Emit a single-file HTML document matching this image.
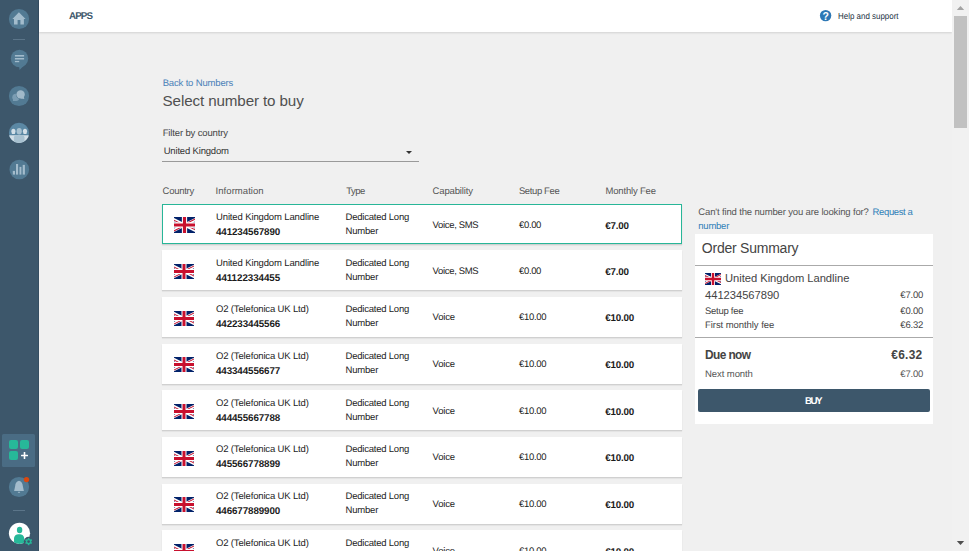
<!DOCTYPE html>
<html lang="en"><head><meta charset="utf-8"><title>Select number to buy</title>
<style>
html,body{margin:0;padding:0}
body{width:969px;height:551px;overflow:hidden;position:relative;background:#f0f0f0;font-family:"Liberation Sans",sans-serif;}
.abs{position:absolute;display:block}
.t{position:absolute;line-height:1;white-space:nowrap}
.side{position:absolute;left:0;top:0;width:39px;height:551px;background:#3d576b;box-shadow:inset -1px 0 0 rgba(30,50,70,.22)}
.top{position:absolute;left:39px;top:0;width:913px;height:32px;background:#fff;box-shadow:0 1px 2px rgba(0,0,0,.13)}
.sb{position:absolute;left:952px;top:0;width:17px;height:551px;background:#f1f1f1}
.thumb{position:absolute;left:954px;top:16px;width:13px;height:112px;background:#c1c1c1}
.arr{position:absolute;left:957px;width:0;height:0;border-left:3.5px solid transparent;border-right:3.5px solid transparent}
.arr.up{top:6px;border-bottom:4px solid #a3a3a3}
.arr.dn{top:541px;border-top:4px solid #505050}
.row{position:absolute;left:162px;width:520px;height:40px;background:#fff;box-sizing:border-box;box-shadow:0 1px 1px rgba(0,0,0,.10),0 2px 1px rgba(0,0,0,.03)}
.row.sel{border:1px solid #28b698}
.card{position:absolute;left:695px;top:234px;width:238px;height:190px;background:#fff}
.btn{position:absolute;left:698px;top:389px;width:232px;height:22.5px;background:#3d576b;border-radius:2px}
</style></head><body>
<div class="side"></div>
<svg class="abs" style="left:0;top:0" width="39" height="551" viewBox="0 0 39 551">
<!-- home -->
<circle cx="19" cy="19" r="10.1" fill="#527a93"/>
<path d="M18.9 12.3 L25.6 18.9 L23.9 18.9 L23.9 24.5 L20.4 24.5 L20.4 20 L17.6 20 L17.6 24.5 L14 24.5 L14 18.9 L12.4 18.9 Z" fill="#a3bccc"/>
<rect x="13" y="39" width="12" height="1" fill="#5b7589"/>
<!-- message -->
<circle cx="19.5" cy="58.5" r="8.7" fill="#527a93"/>
<path d="M19.2 66.5 L26 63.6 L19.5 70.1 Z" fill="#527a93"/>
<rect x="14.9" y="55" width="9.2" height="1.6" fill="#a3bccc"/>
<rect x="14.9" y="58" width="9.2" height="1.5" fill="#a3bccc"/>
<rect x="14.9" y="60.9" width="4.3" height="1.3" fill="#a3bccc"/>
<!-- conversations -->
<circle cx="19" cy="96" r="10.1" fill="#527a93"/>
<circle cx="15.9" cy="97.3" r="3.6" fill="#7b9db3"/>
<path d="M12.8 101 L13.6 98 L17 101 Z" fill="#7b9db3"/>
<circle cx="20.6" cy="94.4" r="4.7" fill="#527a93"/>
<circle cx="20.6" cy="94.4" r="4.2" fill="#a0b9c9"/>
<path d="M24.3 99 L23.6 95.5 L20.5 98.6 Z" fill="#a0b9c9"/>
<!-- people -->
<clipPath id="pc"><circle cx="19" cy="132.9" r="10.1"/></clipPath>
<circle cx="19" cy="132.9" r="10.1" fill="#5b88a4"/>
<g clip-path="url(#pc)">
<ellipse cx="13.4" cy="131.4" rx="2.1" ry="2.7" fill="#d3dfe7"/>
<ellipse cx="25" cy="131.4" rx="2.1" ry="2.7" fill="#d3dfe7"/>
<ellipse cx="19.2" cy="131.2" rx="2.6" ry="3.3" fill="#a8c1d0"/>
<path d="M8 135.2 L30 135.2 L30 144 L8 144 Z" fill="#d3dfe7"/>
<path d="M13.9 144 L13.9 137.6 Q13.9 135.2 16.3 135.2 L22.1 135.2 Q24.5 135.2 24.5 137.6 L24.5 144 Z" fill="#a8c1d0"/>
</g>
<!-- analytics -->
<circle cx="19.3" cy="169.5" r="9.8" fill="#527a93"/>
<rect x="12.8" y="170.9" width="2.2" height="3.7" fill="#a3bccc"/>
<rect x="16" y="164" width="2.1" height="10.6" fill="#a3bccc"/>
<rect x="19.5" y="166.9" width="1.9" height="7.7" fill="#a3bccc"/>
<rect x="22.7" y="164.9" width="2.2" height="9.7" fill="#a3bccc"/>
<!-- apps tile -->
<rect x="2" y="434" width="33" height="33" rx="1.5" fill="#4a6c84"/>
<rect x="9" y="440" width="9" height="9" rx="2" fill="#27b899"/>
<rect x="20" y="440" width="9" height="9" rx="2" fill="#27b899"/>
<rect x="9" y="451" width="9" height="9" rx="2" fill="#27b899"/>
<rect x="21" y="454.7" width="7" height="1.6" rx=".5" fill="#fff"/>
<rect x="23.7" y="452" width="1.6" height="7" rx=".5" fill="#fff"/>
<!-- bell -->
<circle cx="19" cy="487" r="10.1" fill="#527a93"/>
<path d="M19 480.8 C16.3 481.6 15.3 483.6 15.2 486 L14.1 491 L23.9 491 L22.8 486 C22.7 483.6 21.7 481.6 19 480.8 Z" fill="#a3bccc"/>
<rect x="17.9" y="491.8" width="2.2" height="1" rx=".4" fill="#a3bccc"/>
<circle cx="26.5" cy="479.6" r="2.7" fill="#d9480f"/>
<rect x="13" y="510" width="12" height="1" fill="#5b7589"/>
<!-- user -->
<clipPath id="uc"><circle cx="19.5" cy="533.3" r="10.6"/></clipPath>
<circle cx="19.5" cy="533.3" r="10.6" fill="#fff"/>
<g clip-path="url(#uc)">
<ellipse cx="19.6" cy="530" rx="2.7" ry="3.3" fill="#27b899"/>
<path d="M14 546 L14 539 C14 535.5 16.2 534.2 19.1 534.2 C22 534.2 24.2 535.5 24.2 539 L24.2 546 Z" fill="#27b899"/>
</g>
<circle cx="28.6" cy="541.6" r="4.8" fill="#3d576b"/>
<g transform="translate(28.6 541.6)" fill="#27b899">
<circle r="2.7"/>
<rect x="-.8" y="-3.6" width="1.6" height="7.2"/>
<rect x="-.8" y="-3.6" width="1.6" height="7.2" transform="rotate(60)"/>
<rect x="-.8" y="-3.6" width="1.6" height="7.2" transform="rotate(120)"/>
<circle r="1.3" fill="#3d576b"/>
</g>
</svg>
<div class="top"></div>
<div class="t" style="top:11px;line-height:11px;font-size:9.8px;color:#3d576b;left:69.00px;letter-spacing:-0.896px;font-weight:bold;text-rendering:geometricPrecision;">APPS</div>
<svg class="abs" style="left:819px;top:9px" width="14" height="14" viewBox="0 0 14 14"><circle cx="6.6" cy="6.6" r="5.7" fill="#2d78b5"/><text x="6.6" y="10.5" font-family="Liberation Sans, sans-serif" font-size="10.5" font-weight="bold" fill="#fff" text-anchor="middle">?</text></svg>
<div class="t" style="top:11px;line-height:10px;font-size:8.7px;color:#22313f;left:837.90px;transform:scaleX(0.9146);transform-origin:0 0;text-rendering:geometricPrecision;">Help and support</div>
<div class="sb"></div><div class="thumb"></div><svg class="abs" style="left:952px;top:0" width="17" height="551" viewBox="0 0 17 551"><path d="M4.8 10 L12.2 10 L8.5 5.9 Z" fill="#a3a3a3"/><path d="M4.8 541 L12.2 541 L8.5 545.1 Z" fill="#505050"/></svg>
<div class="t" style="top:78px;line-height:11px;font-size:9.5px;color:#4a80b8;left:162.70px;letter-spacing:-0.161px;text-rendering:geometricPrecision;">Back to Numbers</div>
<div class="t" style="top:92px;line-height:17px;font-size:15.2px;color:#505050;left:162.60px;letter-spacing:-0.123px;">Select number to buy</div>
<div class="t" style="top:128px;line-height:11px;font-size:9.5px;color:#444;left:162.70px;letter-spacing:-0.142px;text-rendering:geometricPrecision;">Filter by country</div>
<div class="t" style="top:146px;line-height:11px;font-size:9.5px;color:#333;left:163.70px;letter-spacing:-0.177px;text-rendering:geometricPrecision;">United Kingdom</div>
<div class="abs" style="left:162px;top:161px;width:257px;height:1px;background:#9a9a9a"></div>
<div class="abs" style="left:406px;top:151px;border-left:3px solid transparent;border-right:3px solid transparent;border-top:3.3px solid #333;"></div>
<div class="t" style="top:186px;line-height:11px;font-size:9.5px;color:#555;left:162.60px;letter-spacing:-0.277px;text-rendering:geometricPrecision;">Country</div>
<div class="t" style="top:186px;line-height:11px;font-size:9.5px;color:#555;left:215.60px;letter-spacing:0.048px;text-rendering:geometricPrecision;">Information</div>
<div class="t" style="top:186px;line-height:11px;font-size:9.5px;color:#555;left:346.20px;letter-spacing:-0.532px;text-rendering:geometricPrecision;">Type</div>
<div class="t" style="top:186px;line-height:11px;font-size:9.5px;color:#555;left:432.60px;letter-spacing:-0.157px;text-rendering:geometricPrecision;">Capability</div>
<div class="t" style="top:186px;line-height:11px;font-size:9.5px;color:#555;left:518.90px;letter-spacing:-0.379px;text-rendering:geometricPrecision;">Setup Fee</div>
<div class="t" style="top:186px;line-height:11px;font-size:9.5px;color:#555;left:605.50px;letter-spacing:-0.177px;text-rendering:geometricPrecision;">Monthly Fee</div>
<svg class="abs" style="left:0;top:0" width="0" height="0"><defs><clipPath id="ukt"><path d="M30,15 h30 v15 z v15 h-30 z h-30 v-15 z v-15 h30 z"/></clipPath><symbol id="uk" viewBox="10 0 40 30" preserveAspectRatio="none"><path d="M0,0 v30 h60 v-30 z" fill="#012169"/><path d="M0,0 L60,30 M60,0 L0,30" stroke="#fff" stroke-width="6"/><path d="M0,0 L60,30 M60,0 L0,30" clip-path="url(#ukt)" stroke="#C8102E" stroke-width="4"/><path d="M30,0 v30 M0,15 h60" stroke="#fff" stroke-width="10"/><path d="M30,0 v30 M0,15 h60" stroke="#C8102E" stroke-width="6"/></symbol></defs></svg>
<div class="row sel" style="top:204px"></div>
<svg class="abs" style="left:174px;top:217px" width="21" height="16"><use href="#uk" width="21" height="16"/></svg>
<div class="t" style="top:212px;line-height:11px;font-size:9.5px;color:#1c1c1c;left:216.00px;letter-spacing:-0.130px;text-rendering:geometricPrecision;">United Kingdom Landline</div>
<div class="t" style="top:227px;line-height:11px;font-size:9.8px;color:#1c1c1c;left:216.00px;letter-spacing:-0.109px;font-weight:bold;text-rendering:geometricPrecision;">441234567890</div>
<div class="t" style="top:212px;line-height:11px;font-size:9.5px;color:#1c1c1c;left:345.50px;letter-spacing:-0.212px;text-rendering:geometricPrecision;">Dedicated Long</div>
<div class="t" style="top:226px;line-height:11px;font-size:9.5px;color:#1c1c1c;left:345.50px;letter-spacing:-0.198px;text-rendering:geometricPrecision;">Number</div>
<div class="t" style="top:220px;line-height:11px;font-size:9.5px;color:#1c1c1c;left:432.60px;letter-spacing:-0.334px;text-rendering:geometricPrecision;">Voice, SMS</div>
<div class="t" style="top:220px;line-height:11px;font-size:9.5px;color:#1c1c1c;left:519.00px;letter-spacing:-0.343px;text-rendering:geometricPrecision;">€0.00</div>
<div class="t" style="top:221px;line-height:11px;font-size:9.8px;color:#1c1c1c;left:605.30px;letter-spacing:-0.231px;font-weight:bold;text-rendering:geometricPrecision;">€7.00</div>
<div class="row" style="top:250px"></div>
<svg class="abs" style="left:174px;top:264px" width="20" height="15"><use href="#uk" width="20" height="15"/></svg>
<div class="t" style="top:258px;line-height:11px;font-size:9.5px;color:#1c1c1c;left:216.00px;letter-spacing:-0.130px;text-rendering:geometricPrecision;">United Kingdom Landline</div>
<div class="t" style="top:273px;line-height:11px;font-size:9.8px;color:#1c1c1c;left:216.00px;letter-spacing:-0.060px;font-weight:bold;text-rendering:geometricPrecision;">441122334455</div>
<div class="t" style="top:258px;line-height:11px;font-size:9.5px;color:#1c1c1c;left:345.50px;letter-spacing:-0.212px;text-rendering:geometricPrecision;">Dedicated Long</div>
<div class="t" style="top:272px;line-height:11px;font-size:9.5px;color:#1c1c1c;left:345.50px;letter-spacing:-0.198px;text-rendering:geometricPrecision;">Number</div>
<div class="t" style="top:266px;line-height:11px;font-size:9.5px;color:#1c1c1c;left:432.60px;letter-spacing:-0.334px;text-rendering:geometricPrecision;">Voice, SMS</div>
<div class="t" style="top:266px;line-height:11px;font-size:9.5px;color:#1c1c1c;left:519.00px;letter-spacing:-0.343px;text-rendering:geometricPrecision;">€0.00</div>
<div class="t" style="top:267px;line-height:11px;font-size:9.8px;color:#1c1c1c;left:605.30px;letter-spacing:-0.231px;font-weight:bold;text-rendering:geometricPrecision;">€7.00</div>
<div class="row" style="top:297px"></div>
<svg class="abs" style="left:174px;top:311px" width="20" height="15"><use href="#uk" width="20" height="15"/></svg>
<div class="t" style="top:304px;line-height:11px;font-size:9.5px;color:#1c1c1c;left:216.00px;letter-spacing:-0.157px;text-rendering:geometricPrecision;">O2 (Telefonica UK Ltd)</div>
<div class="t" style="top:319px;line-height:11px;font-size:9.8px;color:#1c1c1c;left:216.00px;letter-spacing:-0.109px;font-weight:bold;text-rendering:geometricPrecision;">442233445566</div>
<div class="t" style="top:304px;line-height:11px;font-size:9.5px;color:#1c1c1c;left:345.50px;letter-spacing:-0.212px;text-rendering:geometricPrecision;">Dedicated Long</div>
<div class="t" style="top:318px;line-height:11px;font-size:9.5px;color:#1c1c1c;left:345.50px;letter-spacing:-0.198px;text-rendering:geometricPrecision;">Number</div>
<div class="t" style="top:312px;line-height:11px;font-size:9.5px;color:#1c1c1c;left:432.60px;letter-spacing:-0.210px;text-rendering:geometricPrecision;">Voice</div>
<div class="t" style="top:312px;line-height:11px;font-size:9.5px;color:#1c1c1c;left:519.00px;letter-spacing:-0.291px;text-rendering:geometricPrecision;">€10.00</div>
<div class="t" style="top:313px;line-height:11px;font-size:9.8px;color:#1c1c1c;left:605.30px;letter-spacing:-0.195px;font-weight:bold;text-rendering:geometricPrecision;">€10.00</div>
<div class="row" style="top:344px"></div>
<svg class="abs" style="left:174px;top:357px" width="20" height="15"><use href="#uk" width="20" height="15"/></svg>
<div class="t" style="top:351px;line-height:11px;font-size:9.5px;color:#1c1c1c;left:216.00px;letter-spacing:-0.157px;text-rendering:geometricPrecision;">O2 (Telefonica UK Ltd)</div>
<div class="t" style="top:366px;line-height:11px;font-size:9.8px;color:#1c1c1c;left:216.00px;letter-spacing:-0.109px;font-weight:bold;text-rendering:geometricPrecision;">443344556677</div>
<div class="t" style="top:351px;line-height:11px;font-size:9.5px;color:#1c1c1c;left:345.50px;letter-spacing:-0.212px;text-rendering:geometricPrecision;">Dedicated Long</div>
<div class="t" style="top:365px;line-height:11px;font-size:9.5px;color:#1c1c1c;left:345.50px;letter-spacing:-0.198px;text-rendering:geometricPrecision;">Number</div>
<div class="t" style="top:359px;line-height:11px;font-size:9.5px;color:#1c1c1c;left:432.60px;letter-spacing:-0.210px;text-rendering:geometricPrecision;">Voice</div>
<div class="t" style="top:359px;line-height:11px;font-size:9.5px;color:#1c1c1c;left:519.00px;letter-spacing:-0.291px;text-rendering:geometricPrecision;">€10.00</div>
<div class="t" style="top:360px;line-height:11px;font-size:9.8px;color:#1c1c1c;left:605.30px;letter-spacing:-0.195px;font-weight:bold;text-rendering:geometricPrecision;">€10.00</div>
<div class="row" style="top:390px"></div>
<svg class="abs" style="left:174px;top:404px" width="20" height="15"><use href="#uk" width="20" height="15"/></svg>
<div class="t" style="top:398px;line-height:11px;font-size:9.5px;color:#1c1c1c;left:216.00px;letter-spacing:-0.157px;text-rendering:geometricPrecision;">O2 (Telefonica UK Ltd)</div>
<div class="t" style="top:413px;line-height:11px;font-size:9.8px;color:#1c1c1c;left:216.00px;letter-spacing:-0.109px;font-weight:bold;text-rendering:geometricPrecision;">444455667788</div>
<div class="t" style="top:398px;line-height:11px;font-size:9.5px;color:#1c1c1c;left:345.50px;letter-spacing:-0.212px;text-rendering:geometricPrecision;">Dedicated Long</div>
<div class="t" style="top:412px;line-height:11px;font-size:9.5px;color:#1c1c1c;left:345.50px;letter-spacing:-0.198px;text-rendering:geometricPrecision;">Number</div>
<div class="t" style="top:406px;line-height:11px;font-size:9.5px;color:#1c1c1c;left:432.60px;letter-spacing:-0.210px;text-rendering:geometricPrecision;">Voice</div>
<div class="t" style="top:406px;line-height:11px;font-size:9.5px;color:#1c1c1c;left:519.00px;letter-spacing:-0.291px;text-rendering:geometricPrecision;">€10.00</div>
<div class="t" style="top:407px;line-height:11px;font-size:9.8px;color:#1c1c1c;left:605.30px;letter-spacing:-0.195px;font-weight:bold;text-rendering:geometricPrecision;">€10.00</div>
<div class="row" style="top:437px"></div>
<svg class="abs" style="left:174px;top:451px" width="20" height="15"><use href="#uk" width="20" height="15"/></svg>
<div class="t" style="top:444px;line-height:11px;font-size:9.5px;color:#1c1c1c;left:216.00px;letter-spacing:-0.157px;text-rendering:geometricPrecision;">O2 (Telefonica UK Ltd)</div>
<div class="t" style="top:459px;line-height:11px;font-size:9.8px;color:#1c1c1c;left:216.00px;letter-spacing:-0.109px;font-weight:bold;text-rendering:geometricPrecision;">445566778899</div>
<div class="t" style="top:444px;line-height:11px;font-size:9.5px;color:#1c1c1c;left:345.50px;letter-spacing:-0.212px;text-rendering:geometricPrecision;">Dedicated Long</div>
<div class="t" style="top:458px;line-height:11px;font-size:9.5px;color:#1c1c1c;left:345.50px;letter-spacing:-0.198px;text-rendering:geometricPrecision;">Number</div>
<div class="t" style="top:452px;line-height:11px;font-size:9.5px;color:#1c1c1c;left:432.60px;letter-spacing:-0.210px;text-rendering:geometricPrecision;">Voice</div>
<div class="t" style="top:452px;line-height:11px;font-size:9.5px;color:#1c1c1c;left:519.00px;letter-spacing:-0.291px;text-rendering:geometricPrecision;">€10.00</div>
<div class="t" style="top:453px;line-height:11px;font-size:9.8px;color:#1c1c1c;left:605.30px;letter-spacing:-0.195px;font-weight:bold;text-rendering:geometricPrecision;">€10.00</div>
<div class="row" style="top:484px"></div>
<svg class="abs" style="left:174px;top:497px" width="20" height="15"><use href="#uk" width="20" height="15"/></svg>
<div class="t" style="top:491px;line-height:11px;font-size:9.5px;color:#1c1c1c;left:216.00px;letter-spacing:-0.157px;text-rendering:geometricPrecision;">O2 (Telefonica UK Ltd)</div>
<div class="t" style="top:506px;line-height:11px;font-size:9.8px;color:#1c1c1c;left:216.00px;letter-spacing:-0.109px;font-weight:bold;text-rendering:geometricPrecision;">446677889900</div>
<div class="t" style="top:491px;line-height:11px;font-size:9.5px;color:#1c1c1c;left:345.50px;letter-spacing:-0.212px;text-rendering:geometricPrecision;">Dedicated Long</div>
<div class="t" style="top:505px;line-height:11px;font-size:9.5px;color:#1c1c1c;left:345.50px;letter-spacing:-0.198px;text-rendering:geometricPrecision;">Number</div>
<div class="t" style="top:499px;line-height:11px;font-size:9.5px;color:#1c1c1c;left:432.60px;letter-spacing:-0.210px;text-rendering:geometricPrecision;">Voice</div>
<div class="t" style="top:499px;line-height:11px;font-size:9.5px;color:#1c1c1c;left:519.00px;letter-spacing:-0.291px;text-rendering:geometricPrecision;">€10.00</div>
<div class="t" style="top:500px;line-height:11px;font-size:9.8px;color:#1c1c1c;left:605.30px;letter-spacing:-0.195px;font-weight:bold;text-rendering:geometricPrecision;">€10.00</div>
<div class="row" style="top:530px"></div>
<svg class="abs" style="left:174px;top:544px" width="20" height="15"><use href="#uk" width="20" height="15"/></svg>
<div class="t" style="top:538px;line-height:11px;font-size:9.5px;color:#1c1c1c;left:216.00px;letter-spacing:-0.157px;text-rendering:geometricPrecision;">O2 (Telefonica UK Ltd)</div>
<div class="t" style="top:553px;line-height:11px;font-size:9.8px;color:#1c1c1c;left:216.00px;letter-spacing:-0.060px;font-weight:bold;text-rendering:geometricPrecision;">447788990011</div>
<div class="t" style="top:538px;line-height:11px;font-size:9.5px;color:#1c1c1c;left:345.50px;letter-spacing:-0.212px;text-rendering:geometricPrecision;">Dedicated Long</div>
<div class="t" style="top:552px;line-height:11px;font-size:9.5px;color:#1c1c1c;left:345.50px;letter-spacing:-0.198px;text-rendering:geometricPrecision;">Number</div>
<div class="t" style="top:546px;line-height:11px;font-size:9.5px;color:#1c1c1c;left:432.60px;letter-spacing:-0.210px;text-rendering:geometricPrecision;">Voice</div>
<div class="t" style="top:546px;line-height:11px;font-size:9.5px;color:#1c1c1c;left:519.00px;letter-spacing:-0.291px;text-rendering:geometricPrecision;">€10.00</div>
<div class="t" style="top:547px;line-height:11px;font-size:9.8px;color:#1c1c1c;left:605.30px;letter-spacing:-0.195px;font-weight:bold;text-rendering:geometricPrecision;">€10.00</div>
<div class="t" style="top:207px;line-height:11px;font-size:9.5px;color:#555;left:698.30px;letter-spacing:-0.147px;text-rendering:geometricPrecision;">Can't find the number you are looking for?</div>
<div class="t" style="top:207px;line-height:11px;font-size:9.5px;color:#2f7fb8;left:872.60px;letter-spacing:-0.376px;text-rendering:geometricPrecision;">Request a</div>
<div class="t" style="top:221px;line-height:11px;font-size:9.5px;color:#2f7fb8;left:698.30px;letter-spacing:-0.242px;text-rendering:geometricPrecision;">number</div>
<div class="card"></div>
<div class="t" style="top:240px;line-height:16px;font-size:14px;color:#444;left:701.80px;letter-spacing:-0.231px;">Order Summary</div>
<div class="abs" style="left:695px;top:265px;width:238px;height:1px;background:#aaa"></div>
<svg class="abs" style="left:705px;top:273px" width="16" height="12"><use href="#uk" width="16" height="12"/></svg>
<div class="t" style="top:272px;line-height:12px;font-size:11.2px;color:#444;left:725.00px;letter-spacing:-0.030px;">United Kingdom Landline</div>
<div class="t" style="top:289px;line-height:12px;font-size:11.2px;color:#444;left:705.00px;letter-spacing:-0.032px;">441234567890</div>
<div class="t" style="top:290px;line-height:11px;font-size:9.5px;color:#444;right:46.20px;letter-spacing:-0.218px;margin-right:-0.218px;text-rendering:geometricPrecision;">€7.00</div>
<div class="t" style="top:306px;line-height:11px;font-size:9.5px;color:#444;left:705.00px;letter-spacing:-0.272px;text-rendering:geometricPrecision;">Setup fee</div>
<div class="t" style="top:306px;line-height:11px;font-size:9.5px;color:#444;right:46.20px;letter-spacing:-0.218px;margin-right:-0.218px;text-rendering:geometricPrecision;">€0.00</div>
<div class="t" style="top:320px;line-height:11px;font-size:9.5px;color:#444;left:705.00px;letter-spacing:-0.063px;text-rendering:geometricPrecision;">First monthly fee</div>
<div class="t" style="top:320px;line-height:11px;font-size:9.5px;color:#444;right:46.20px;letter-spacing:-0.218px;margin-right:-0.218px;text-rendering:geometricPrecision;">€6.32</div>
<div class="abs" style="left:695px;top:337px;width:238px;height:1px;background:#aaa"></div>
<div class="t" style="top:348px;line-height:14px;font-size:11.9px;color:#444;left:705.00px;letter-spacing:-0.597px;font-weight:bold;">Due now</div>
<div class="t" style="top:348px;line-height:14px;font-size:11.9px;color:#444;right:46.20px;letter-spacing:0.305px;margin-right:0.305px;font-weight:bold;">€6.32</div>
<div class="t" style="top:369px;line-height:11px;font-size:9.5px;color:#555;left:705.00px;letter-spacing:-0.075px;text-rendering:geometricPrecision;">Next month</div>
<div class="t" style="top:369px;line-height:11px;font-size:9.5px;color:#555;right:46.20px;letter-spacing:-0.218px;margin-right:-0.218px;text-rendering:geometricPrecision;">€7.00</div>
<div class="btn"></div>
<div class="t" style="top:396px;line-height:11px;font-size:9.8px;color:#fff;left:805.10px;letter-spacing:-1.646px;font-weight:bold;text-rendering:geometricPrecision;">BUY</div>
</body></html>
